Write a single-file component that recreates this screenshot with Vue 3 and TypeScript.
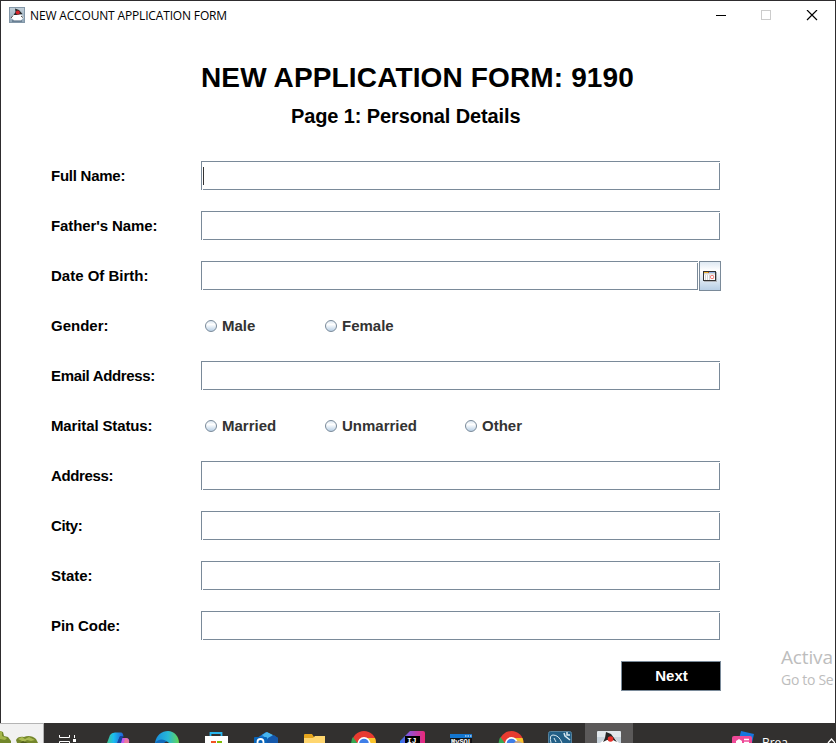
<script setup lang="ts">
import { ref } from 'vue'

interface Row {
  label: string
  kind: 'text' | 'date' | 'radio'
  tracking: number
  options?: string[]
  focused?: boolean
}

const formNumber = ref<number>(9190)

const rows: Row[] = [
  { label: 'Full Name:', kind: 'text', tracking: -0.25, focused: true },
  { label: "Father's Name:", kind: 'text', tracking: -0.1 },
  { label: 'Date Of Birth:', kind: 'date', tracking: 0 },
  { label: 'Gender:', kind: 'radio', tracking: 0, options: ['Male', 'Female'] },
  { label: 'Email Address:', kind: 'text', tracking: -0.33 },
  { label: 'Marital Status:', kind: 'radio', tracking: -0.13, options: ['Married', 'Unmarried', 'Other'] },
  { label: 'Address:', kind: 'text', tracking: -0.36 },
  { label: 'City:', kind: 'text', tracking: -0.4 },
  { label: 'State:', kind: 'text', tracking: -0.05 },
  { label: 'Pin Code:', kind: 'text', tracking: -0.1 },
]
</script>

<template>
  <div class="screen">
    <main class="window">
      <header class="titlebar">
        <svg class="app-icon" viewBox="0 0 16 16">
          <defs>
            <linearGradient id="cup" x1="0" y1="0" x2="0" y2="1">
              <stop offset="0" stop-color="#c3d0da" /><stop offset="1" stop-color="#8fa5b6" />
            </linearGradient>
          </defs>
          <rect x=".5" y=".5" width="15" height="15" fill="url(#cup)" stroke="#8397a8" />
          <path d="M1.500 11 4 8l3-1 4 0 3 2 .5 2-1.500 1-1 2H5l-1-2z" fill="#fff" />
          <path d="M6 1.500l4 1.500 3.500 4-3 .5-3 .5-3 0 2-3z" fill="#2a2a2a" />
          <circle cx="8.800" cy="5.600" r="2" fill="#d8242b" />
          <path d="M4 8.500l-2 2.500M12 9l2 1.500" stroke="#444" fill="none" />
          <path d="M3 14h10" stroke="#405870" />
        </svg>
        <span class="caption">NEW ACCOUNT APPLICATION FORM</span>
        <svg class="controls" viewBox="0 0 102 12" shape-rendering="crispEdges">
          <path d="M0 5.5h10" stroke="#000" />
          <rect x="45.5" y=".5" width="9" height="9" fill="none" stroke="#ccc" />
          <path d="M91 0l10 10M101 0l-10 10" stroke="#000" shape-rendering="auto" stroke-width="1.2" />
        </svg>
      </header>

      <h1>NEW APPLICATION FORM: {{ formNumber }}</h1>
      <h2>Page 1: Personal Details</h2>

      <form class="form">
        <div v-for="row in rows" :key="row.label" class="row">
          <span class="label" :style="{ letterSpacing: row.tracking + 'px' }">{{ row.label }}</span>
          <div v-if="row.kind === 'radio'" class="radios">
            <label v-for="o in row.options" :key="o" class="radio"><i class="dot"></i><span>{{ o }}</span></label>
          </div>
          <div v-else class="control">
            <div class="field"><i v-if="row.focused" class="caret"></i></div>
            <button v-if="row.kind === 'date'" type="button" class="calendar">
              <svg width="14" height="11" viewBox="0 0 14 11">
                <path d="M1 10h13v1H1zM13 1h1v10h-1z" fill="#b0b4ba" />
                <path d="M0 0h13v10H0z" fill="#333" />
                <path d="M1 1h11v8H1z" fill="#fff" />
                <path d="M1 1h4v1H1z" fill="#f5b62e" />
                <path d="M5 1h1v1H5z" fill="#c65a22" />
                <path d="M6 1h6v1H6z" fill="#94b3e3" />
                <path d="M1 2h11v1.500H1zM2 4h1v5H2zM4 4h1v5H4zM6 4h1v5H6z" fill="#d5d5d5" />
                <rect x="7.600" y="4.500" width="3" height="3" rx=".8" fill="#fff" stroke="#ed6a65" />
              </svg>
            </button>
          </div>
        </div>
      </form>

      <div class="actions"><button type="button" class="next">Next</button></div>
      <aside class="watermark">
        <div class="wm-title">Activa</div>
        <div class="wm-sub">Go to Se</div>
      </aside>
    </main>

    <footer class="taskbar">
      <svg class="widget" viewBox="0 0 44 20">
        <rect width="44" height="20" fill="#f1f1f1" /><path d="M0 .5h44M43.500 0v20" stroke="#b4b4b4" />
        <path d="M0 8l3 1 1 4 4 1 3 4v2H0z" fill="#71872a" /><path d="M0 8l2 1 0 4 5 2-2 2-5-1z" fill="#a4b64a" />
        <path d="M16 17c1-3 5-4 8-3 4-2 9-1 12 2l2 4H17z" fill="#74862b" />
        <path d="M18 16l4-2 3 2 4-2 6 3-4 1-4-1-3 2z" fill="#aaba52" /><path d="M20 20l3-2 5 2" fill="#505d1d" />
      </svg>
      <div class="tasks">
        <span class="task">
          <svg viewBox="0 0 28 12"><path d="M5.500 4v2.500h10V4M5.500 12V10.500h10V12M20.500 4v3" stroke="#fff" fill="none" /><path d="M19 8h3v3h-3z" fill="#fff" /></svg>
        </span>
        <span class="task">
          <svg viewBox="0 0 28 12">
            <defs><linearGradient id="cop"><stop stop-color="#45c78b" /><stop offset=".4" stop-color="#1abdf0" /><stop offset="1" stop-color="#245ed6" /></linearGradient></defs>
            <path d="M4 12l3-8q1.500-2.500 5-2.500h6q2 0 2.500 4l-4 1-2 5.500z" fill="url(#cop)" /><path d="M14 12l3-5h6q4 0 3 5z" fill="#c75be8" /><path d="M14 12l3-7 3 0-2 7z" fill="#1545a5" /><path d="M22 7q4 0 4 5h-5z" fill="#e9799b" />
          </svg>
        </span>
        <span class="task">
          <svg viewBox="0 0 28 12">
            <defs><linearGradient id="edge"><stop stop-color="#168de0" /><stop offset=".55" stop-color="#28b9d5" /><stop offset="1" stop-color="#64d653" /></linearGradient></defs>
            <path d="M3 12C4 4 10 0 16 0s11 5 11 12z" fill="url(#edge)" /><path d="M3 12c3-4 9-5 13 0z" fill="#136bbb" /><path d="M12 12q3-3 5 0z" fill="#333130" />
          </svg>
        </span>
        <span class="task">
          <svg viewBox="0 0 28 12"><path d="M8.500 6V2h11v4" fill="none" stroke="#28b5ed" stroke-width="1.800" /><path d="M3 5h23v7H3z" fill="#fff" /><path d="M9 10h5v2H9z" fill="#f35325" /><path d="M15 10h5v2h-5z" fill="#81bc06" /></svg>
        </span>
        <span class="task">
          <svg viewBox="0 0 28 12"><path d="M6 7l9-6 12 6v5H6z" fill="#1b76d3" /><path d="M11 4l5-3 6 3-6 4z" fill="#47b5ef" /><path d="M17 7l6-3 4 3v5H15z" fill="#1558ab" /><rect x="3" y="6" width="13" height="8" rx="1" fill="#0864b9" /><circle cx="9.500" cy="11" r="3" fill="none" stroke="#fff" stroke-width="1.800" /></svg>
        </span>
        <span class="task">
          <svg viewBox="0 0 28 12"><path d="M4 12V4q0-1 1-1h7l2 3h10q1 0 1 1v5z" fill="#e6a51d" /><path d="M4 7h9l2-2h10v7H4z" fill="#ffd66f" /></svg>
        </span>
        <span class="task">
          <svg viewBox="0 0 28 12"><circle cx="15" cy="12" r="12" fill="#e83b30" /><path d="M4 6l7 10-8-1q-2-5 1-9" fill="#36a852" /><path d="M15 7h11q1 2 1 5H19z" fill="#f9c52c" /><circle cx="15" cy="12.500" r="6.500" fill="#fff" /><circle cx="15" cy="12.500" r="4.800" fill="#3e7ee8" /></svg>
        </span>
        <span class="task">
          <svg viewBox="0 0 28 12">
            <defs><linearGradient id="ij"><stop stop-color="#2479ec" /><stop offset=".35" stop-color="#8d52d8" /><stop offset="1" stop-color="#ee2878" /></linearGradient></defs>
            <path d="M2 10l10-10h13q2 0 2 2v10H2z" fill="url(#ij)" /><path d="M7 5h15v7H7z" fill="#000" /><text x="9" y="12" class="ij">IJ</text>
          </svg>
        </span>
        <span class="task">
          <svg viewBox="0 0 28 12"><path d="M3 3h22v9H3z" fill="#101317" /><path d="M3 3h22v4H3z" fill="#1375cf" /><path d="M18 5h1.500M20.500 5H22M23 5h1.500" stroke="#fff" /><text x="4" y="12.500" class="my">MySQL</text></svg>
        </span>
        <span class="task">
          <svg viewBox="0 0 28 12"><circle cx="14.500" cy="12" r="12" fill="#e83b30" /><path d="M3.500 6l7 10-8-1q-2-5 1-9" fill="#36a852" /><path d="M14.500 7h11q1 2 1 5h-8z" fill="#f9c52c" /><circle cx="14.500" cy="12.500" r="6.500" fill="#fff" /><circle cx="14.500" cy="12.500" r="4.800" fill="#3e7ee8" /><path d="M17 12q3-4 7-1l2 1z" fill="#c9a98a" /></svg>
        </span>
        <span class="task">
          <svg viewBox="0 0 28 12"><rect x="2.500" y=".5" width="23" height="16" rx="2" fill="#235f86" stroke="#55819c" /><path d="M5 12Q3 4 7 4q6 0 9 8M8 7l2 4" fill="none" stroke="#d9e9f1" /><path d="M18 2l1 3 5 4M21 1v3h3" fill="none" stroke="#d9e9f1" stroke-width="1.500" /></svg>
        </span>
        <span class="task active">
          <svg viewBox="0 0 28 12"><rect x="2" width="24" height="16" rx="1" fill="#e1e7ec" /><path d="M2 6h24v6H2z" fill="#c8d3dc" /><path d="M5 12l6-5h8l5 5z" fill="#fff" /><path d="M11 1l5 2 6 8-4-2h-6l-4 2 2-4z" fill="#242424" /><circle cx="15.500" cy="8" r="2.800" fill="#e62e28" /></svg>
        </span>
      </div>
      <div class="news">
        <svg width="26" height="12" viewBox="0 0 26 12"><path d="M11 0l13 3-2 9H8z" fill="#1676df" /><rect x="2" y="5" width="20" height="10" rx="2" fill="#ef4a98" /><path d="M6 10l3-2 3 2v2H6z" fill="#fff" /><path d="M14 8.500h5M14 11.500h5" stroke="#fff" stroke-width="1.300" /></svg>
        <span>Brea</span>
      </div>
      <svg class="chevron" width="8" height="8" viewBox="0 0 8 8"><path d="M1 6l3.500-4L8 6" fill="none" stroke="#fff" stroke-width="1.300" /></svg>
    </footer>
  </div>
</template>

<style>
body { margin: 0; overflow: hidden; }
</style>

<style scoped>
.screen {
  width: 836px; height: 743px; overflow: hidden; box-sizing: border-box;
  background: #2e2c2e; display: flex; flex-direction: column; padding-top: 1px;
  font-family: "Liberation Sans", Arial, sans-serif;
}
.window {
  position: relative; height: 722px; flex: none; margin: 0 1px; background: #fff; overflow: hidden;
}
.titlebar { display: flex; align-items: center; height: 30px; padding: 0 17px 0 8px; }
.app-icon { width: 16px; height: 16px; margin-top: -2px; }
.caption {
  margin: -2px 0 0 5px; flex: 1; font: 12px "Open Sans", "Noto Sans", sans-serif;
  letter-spacing: -0.16px; color: #000; white-space: nowrap;
}
.controls { width: 102px; height: 12px; }
h1 {
  margin: 31px 0 0 200px; font-size: 28px; line-height: 32px; letter-spacing: 0.14px; white-space: nowrap;
}
h2 {
  margin: 10px 0 0 290px; font-size: 20px; line-height: 24px; letter-spacing: -0.12px; white-space: nowrap;
}
.form { margin: 33px 0 0 50px; display: grid; row-gap: 20px; }
.row { display: flex; height: 30px; }
.label { width: 150px; font-size: 15px; font-weight: bold; line-height: 30px; white-space: nowrap; }
.control { display: flex; width: 520px; gap: 2px; }
.field {
  flex: 1; height: 29px; margin-right: 1px; box-sizing: border-box; padding: 6px 0 0 2px;
  background:
    linear-gradient(#7a8a99, #7a8a99) 0 0 / 100% 1px no-repeat,
    linear-gradient(#7a8a99, #7a8a99) 0 0 / 1px 100% no-repeat,
    linear-gradient(#7a8a99, #7a8a99) 100% 2px / 1px 100% no-repeat,
    linear-gradient(#7a8a99, #7a8a99) 2px 100% / 100% 1px no-repeat;
}
.field:not(:last-child) { margin-right: -1px; }
.caret { display: block; width: 1px; height: 18px; background: #333; }
.calendar {
  width: 22px; height: 30px; padding: 0; border: 1px solid #7a8a99; box-sizing: border-box;
  display: flex; align-items: center; justify-content: center;
  background: linear-gradient(#dfe9f3, #fff 30%, #b8cfe5);
}
.radios { display: flex; padding-left: 4px; }
.radio {
  display: flex; align-items: center; width: 120px; font-size: 15px; font-weight: bold; color: #333;
}
.radio span { padding-bottom: 2px; }
.radio:nth-child(2) { width: 140px; }
.dot {
  width: 12px; height: 12px; box-sizing: border-box; border: 1px solid #7a8a99; border-radius: 50%;
  margin-right: 5px; background: linear-gradient(#dce7f2, #fff 35%, #b8cfe5);
}
.actions { display: flex; justify-content: flex-end; margin: 20px 114px 0 0; }
.next {
  width: 100px; height: 30px; border: 1px solid #7a8a99; background: #000; color: #fff; padding: 0 0 2px 1px;
  font: bold 15px "Liberation Sans", Arial, sans-serif;
}
.watermark {
  position: absolute; left: 780px; top: 643px; white-space: nowrap; color: #bdbdbd;
  font-family: "Open Sans", "Noto Sans", sans-serif; font-weight: 400;
}
.wm-title { font-size: 19px; line-height: 26px; letter-spacing: -0.15px; }
.wm-sub { font-size: 14px; line-height: 19px; letter-spacing: -0.3px; }
.taskbar { display: flex; height: 20px; background: #32302f; overflow: hidden; }
.widget { width: 44px; height: 20px; flex: none; }
.tasks { display: flex; gap: 1.180px; flex: none; }
.task { width: 48px; height: 20px; display: flex; justify-content: center; align-items: flex-end; }
.task svg { width: 28px; height: 12px; }
.task.active { background: #5b5959; }
.ij { font: bold 8px "Liberation Mono", monospace; fill: #fff; }
.my { font: bold 7px "Liberation Mono", monospace; fill: #fff; }
.news {
  display: flex; margin-left: 97px; padding-top: 8px; gap: 6px; color: #fff;
  font: 12px/23px "Open Sans", sans-serif; width: 90px;
}
.chevron { margin: 14px 0 0 7px; flex: none; }
</style>
